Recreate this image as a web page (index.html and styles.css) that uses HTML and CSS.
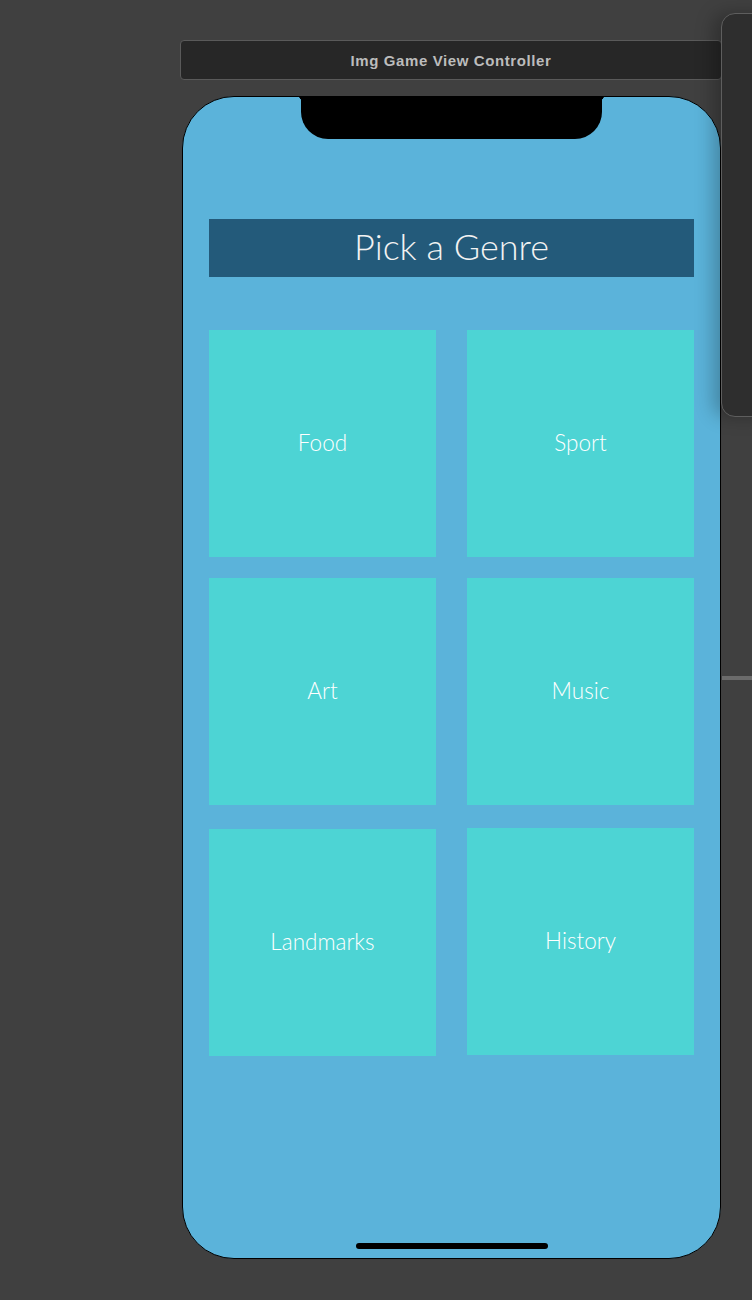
FILE: index.html
```html
<!DOCTYPE html>
<html lang="en">
<head>
    <meta charset="UTF-8">
    <meta name="viewport" content="width=device-width, initial-scale=1.0">
    <title>Img Game View Controller</title>
    <link rel="stylesheet" href="styles.css">
</head>
<body>
    <div class="canvas">
        <div class="scene-title">Img Game View Controller</div>

        <div class="phone">
            <div class="notch"></div>

            <h1 class="genre-header">Pick a Genre</h1>

            <div class="genre-grid">
                <button class="tile">Food</button>
                <button class="tile">Sport</button>
                <button class="tile">Art</button>
                <button class="tile">Music</button>
                <button class="tile tile-low">Landmarks</button>
                <button class="tile tile-low2">History</button>
            </div>

            <div class="home-bar"></div>
        </div>

        <!-- next scene peeking in from the right -->
        <div class="side-panel"></div>
        <div class="side-line"></div>
    </div>
</body>
</html>
```

FILE: styles.css
```css
body {
    margin: 0;
    background-color: #404040;
    font-family: Lato, "Open Sans", sans-serif;
}
.canvas {
    position: relative;
    width: 752px;
    height: 1300px;
    overflow: hidden;
    padding-top: 40px;
    box-sizing: border-box;
}
.scene-title {
    margin-left: 180px;
    width: 542px;
    height: 40px;
    box-sizing: border-box;
    background-color: #272727;
    border: 1px solid #5a5a5a;
    border-radius: 4px;
    color: #bcbcbc;
    font-family: "Liberation Sans", Arial, sans-serif;
    font-weight: bold;
    font-size: 15px;
    letter-spacing: 0.6px;
    display: flex;
    align-items: center;
    justify-content: center;
}
.phone {
    position: relative;
    margin-top: 16px;
    margin-left: 182px;
    width: 539px;
    height: 1163px;
    box-sizing: border-box;
    background-color: #5bb3da;
    border: 1px solid #000;
    border-radius: 52px;
    padding: 122px 26px 0 26px;
}
.notch {
    position: absolute;
    top: -1px;
    left: 118px;
    width: 301px;
    height: 43px;
    background-color: #000;
    border-radius: 0 0 27px 27px;
}
.notch::before,
.notch::after {
    content: "";
    position: absolute;
    top: 0;
    width: 6px;
    height: 6px;
}
.notch::before {
    left: -6px;
    background: radial-gradient(circle at 0 100%, transparent 6px, #000 6.5px);
}
.notch::after {
    right: -6px;
    background: radial-gradient(circle at 100% 100%, transparent 6px, #000 6.5px);
}
.genre-header {
    margin: 0;
    height: 58px;
    box-sizing: border-box;
    padding-bottom: 4px;
    background-color: #235a7a;
    color: #f2f2f2;
    font-weight: 300;
    font-size: 36px;
    display: flex;
    align-items: center;
    justify-content: center;
}
.genre-grid {
    margin-top: 53px;
    display: grid;
    grid-template-columns: 227px 227px;
    grid-auto-rows: 227px;
    column-gap: 31px;
    row-gap: 21px;
}
.tile {
    border: none;
    padding: 0 0 3px 0;
    background-color: #4dd4d4;
    color: #fff;
    font-family: Lato, "Open Sans", sans-serif;
    font-weight: 300;
    font-size: 22.5px;
}
.tile-low {
    margin-top: 3px;
    margin-bottom: -3px;
}
.tile-low2 {
    margin-top: 2px;
    margin-bottom: -2px;
}
.home-bar {
    position: absolute;
    bottom: 9px;
    left: 50%;
    transform: translateX(-50%);
    width: 192px;
    height: 6px;
    border-radius: 3px;
    background-color: #000;
}
.side-panel {
    position: absolute;
    top: 13px;
    left: 721px;
    width: 60px;
    height: 404px;
    box-sizing: border-box;
    background-color: #2e2e2e;
    border: 1px solid #5e5e5e;
    border-radius: 14px;
    box-shadow: -8px 0 18px rgba(0, 0, 0, 0.25);
}
.side-line {
    position: absolute;
    top: 676px;
    left: 722px;
    width: 40px;
    height: 4px;
    background-color: #6b6b6b;
}
```
